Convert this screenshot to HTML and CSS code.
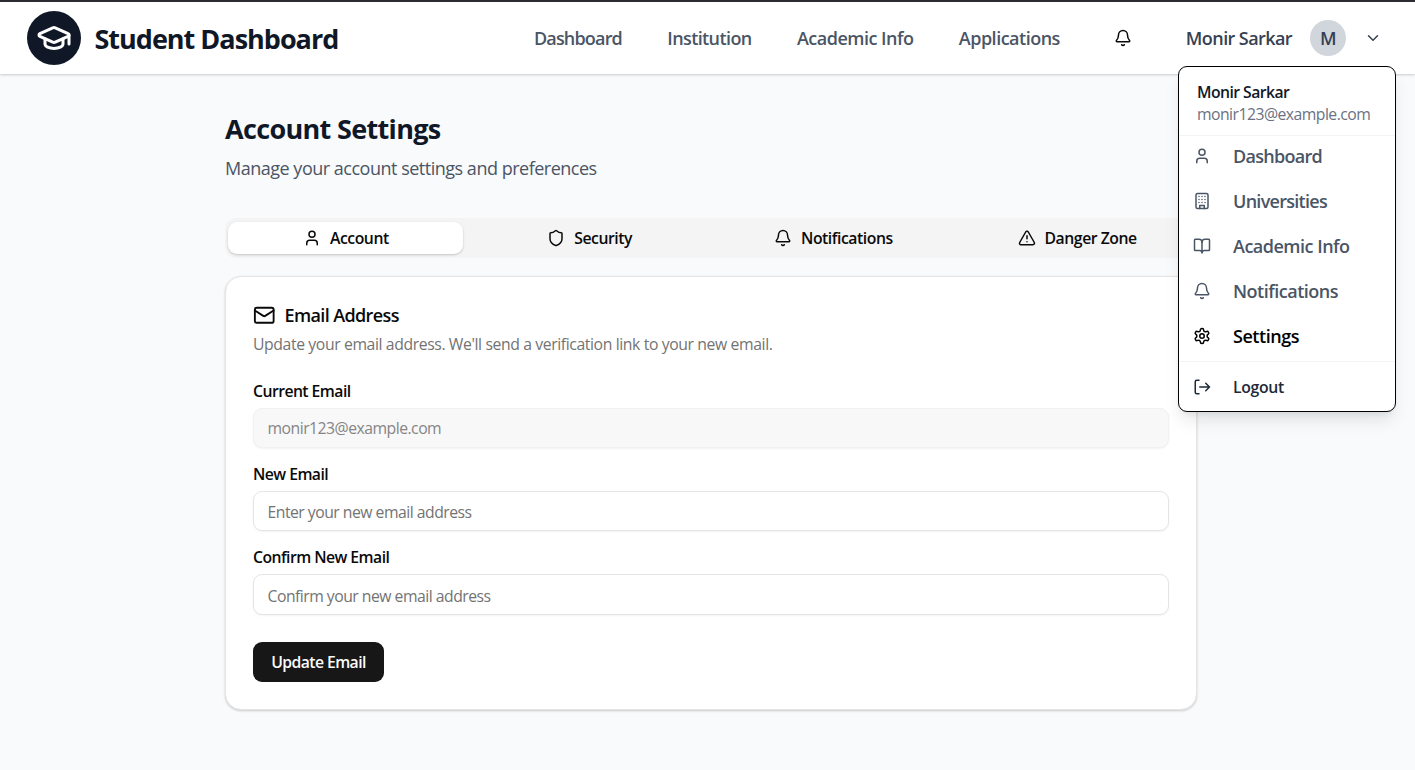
FILE: index.html
```html
<!DOCTYPE html>
<html lang="en">
<head>
<meta charset="utf-8">
<title>Student Dashboard</title>
<link rel="stylesheet" href="styles.css">
</head>
<body>
<svg class="sprite" aria-hidden="true">
  <symbol id="user" viewBox="0 0 24 24"><path d="M19 21v-2a4 4 0 0 0-4-4H9a4 4 0 0 0-4 4v2"/><circle cx="12" cy="7" r="4"/></symbol>
  <symbol id="bell" viewBox="0 0 24 24"><path d="M10.268 21a2 2 0 0 0 3.464 0"/><path d="M3.262 15.326A1 1 0 0 0 4 17h16a1 1 0 0 0 .74-1.673C19.41 13.956 18 12.499 18 8A6 6 0 0 0 6 8c0 4.499-1.411 5.956-2.738 7.326"/></symbol>
  <symbol id="shield" viewBox="0 0 24 24"><path d="M20 13c0 5-3.5 7.5-7.66 8.95a1 1 0 0 1-.67-.01C7.5 20.5 4 18 4 13V6a1 1 0 0 1 1-1c2 0 4.5-1.2 6.24-2.72a1.17 1.17 0 0 1 1.52 0C14.51 3.81 17 5 19 5a1 1 0 0 1 1 1z"/></symbol>
  <symbol id="alert" viewBox="0 0 24 24"><path d="m21.73 18-8-14a2 2 0 0 0-3.48 0l-8 14A2 2 0 0 0 4 21h16a2 2 0 0 0 1.73-3"/><path d="M12 9v4M12 17h.01"/></symbol>
  <symbol id="mail" viewBox="0 0 24 24"><rect x="2" y="4" width="20" height="16" rx="2"/><path d="m22 7-8.97 5.7a1.94 1.94 0 0 1-2.06 0L2 7"/></symbol>
  <symbol id="book" viewBox="0 0 24 24"><path d="M12 7v14"/><path d="M3 18a1 1 0 0 1-1-1V4a1 1 0 0 1 1-1h5a4 4 0 0 1 4 4 4 4 0 0 1 4-4h5a1 1 0 0 1 1 1v13a1 1 0 0 1-1 1h-6a3 3 0 0 0-3 3 3 3 0 0 0-3-3z"/></symbol>
  <symbol id="building" viewBox="0 0 24 24"><rect x="4" y="2" width="16" height="20" rx="2"/><path d="M9 22v-4h6v4M8 6h.01M16 6h.01M12 6h.01M12 10h.01M12 14h.01M16 10h.01M16 14h.01M8 10h.01M8 14h.01"/></symbol>
  <symbol id="gear" viewBox="0 0 24 24"><path d="M12.22 2h-.44a2 2 0 0 0-2 2v.18a2 2 0 0 1-1 1.73l-.43.25a2 2 0 0 1-2 0l-.15-.08a2 2 0 0 0-2.73.73l-.22.38a2 2 0 0 0 .73 2.73l.15.1a2 2 0 0 1 1 1.72v.51a2 2 0 0 1-1 1.74l-.15.09a2 2 0 0 0-.73 2.73l.22.38a2 2 0 0 0 2.73.73l.15-.08a2 2 0 0 1 2 0l.43.25a2 2 0 0 1 1 1.73V20a2 2 0 0 0 2 2h.44a2 2 0 0 0 2-2v-.18a2 2 0 0 1 1-1.73l.43-.25a2 2 0 0 1 2 0l.15.08a2 2 0 0 0 2.73-.73l.22-.39a2 2 0 0 0-.73-2.73l-.15-.08a2 2 0 0 1-1-1.74v-.5a2 2 0 0 1 1-1.74l.15-.09a2 2 0 0 0 .73-2.73l-.22-.38a2 2 0 0 0-2.73-.73l-.15.08a2 2 0 0 1-2 0l-.43-.25a2 2 0 0 1-1-1.73V4a2 2 0 0 0-2-2z"/><circle cx="12" cy="12" r="3"/></symbol>
  <symbol id="logout" viewBox="0 0 24 24"><path d="M8 3H5a2 2 0 0 0-2 2v14a2 2 0 0 0 2 2h3"/><path d="m17 17 5-5-5-5M22 12H9"/></symbol>
  <symbol id="chevron" viewBox="0 0 24 24"><path d="m6 9 6 6 6-6"/></symbol>
  <symbol id="cap" viewBox="0 0 24 24"><path d="M21.42 10.922a1 1 0 0 0-.019-1.838L12.83 5.18a2 2 0 0 0-1.66 0L2.6 9.08a1 1 0 0 0 0 1.832l8.57 3.908a2 2 0 0 0 1.66 0z"/><path d="M22 10v6M6 12.5V16a6 3 0 0 0 12 0v-3.5"/></symbol>
</svg>

<header class="header">
  <div class="brand">
    <span class="brand-mark"><svg class="icon icon-cap"><use href="#cap"/></svg></span>
    <span class="brand-name">Student Dashboard</span>
  </div>
  <nav class="nav">
    <a class="nav-link tight">Dashboard</a>
    <a class="nav-link snug">Institution</a>
    <a class="nav-link">Academic Info</a>
    <a class="nav-link">Applications</a>
  </nav>
  <svg class="icon header-bell"><use href="#bell"/></svg>
  <div class="profile">
    <span class="profile-name">Monir Sarkar</span>
    <span class="avatar">M</span>
    <svg class="icon icon-chevron"><use href="#chevron"/></svg>
  </div>
  <div class="menu">
    <div class="menu-head">
      <div class="menu-name">Monir Sarkar</div>
      <div class="menu-mail">monir123@example.com</div>
    </div>
    <div class="menu-list">
      <a class="menu-item tight"><svg class="icon"><use href="#user"/></svg><span>Dashboard</span></a>
      <a class="menu-item tight"><svg class="icon"><use href="#building"/></svg><span>Universities</span></a>
      <a class="menu-item"><svg class="icon"><use href="#book"/></svg><span>Academic Info</span></a>
      <a class="menu-item"><svg class="icon"><use href="#bell"/></svg><span>Notifications</span></a>
      <a class="menu-item active"><svg class="icon"><use href="#gear"/></svg><span>Settings</span></a>
    </div>
    <a class="menu-item menu-logout"><svg class="icon"><use href="#logout"/></svg><span>Logout</span></a>
  </div>
</header>

<main class="main">
  <h1 class="title">Account Settings</h1>
  <p class="subtitle">Manage your account settings and preferences</p>
  <div class="tabs">
    <div class="tab selected"><svg class="icon"><use href="#user"/></svg><span>Account</span></div>
    <div class="tab"><svg class="icon"><use href="#shield"/></svg><span>Security</span></div>
    <div class="tab"><svg class="icon"><use href="#bell"/></svg><span>Notifications</span></div>
    <div class="tab"><svg class="icon"><use href="#alert"/></svg><span>Danger Zone</span></div>
  </div>
  <section class="card">
    <h2 class="card-title"><svg class="icon icon-mail"><use href="#mail"/></svg><span>Email Address</span></h2>
    <p class="card-text">Update your email address. We'll send a verification link to your new email.</p>
    <div class="field">
      <label class="label">Current Email</label>
      <input class="input" type="text" value="monir123@example.com" disabled>
    </div>
    <div class="field">
      <label class="label">New Email</label>
      <input class="input" type="text" placeholder="Enter your new email address">
    </div>
    <div class="field">
      <label class="label">Confirm New Email</label>
      <input class="input input-last" type="text" placeholder="Confirm your new email address">
    </div>
    <button class="button">Update Email</button>
  </section>
</main>
</body>
</html>
```
FILE: styles.css
```css
* { box-sizing: border-box; }
body {
  margin: 0;
  height: 770px;
  overflow: hidden;
  background: #f9fafb;
  color: #0a0a0a;
  font: 15.75px/22px "Open Sans", "Noto Sans", sans-serif;
  letter-spacing: -0.4px;
}
h1, h2, p { margin: 0; }
.sprite { display: none; }
.icon {
  width: 18px;
  height: 18px;
  flex: none;
  fill: none;
  stroke: currentColor;
  stroke-width: 2;
  stroke-linecap: round;
  stroke-linejoin: round;
}
.header {
  position: relative;
  z-index: 2;
  display: flex;
  align-items: center;
  height: 74px;
  padding: 0 33px 0 27px;
  background: #fff;
  border-top: 2px solid #2f2b33;
  box-shadow: 0 1px 3px rgba(0,0,0,.1), 0 1px 2px rgba(0,0,0,.1);
}
.brand { display: flex; align-items: center; gap: 13.5px; flex: 1; }
.brand-mark {
  display: flex;
  align-items: center;
  justify-content: center;
  width: 54px;
  height: 54px;
  border-radius: 50%;
  background: #101828;
  color: #fff;
}
.icon-cap { width: 36px; height: 36px; }
.brand-name { font-size: 27px; line-height: 36px; font-weight: 700; color: #101828; letter-spacing: -1px; padding-top: 2px; }
.nav { display: flex; gap: 45.3px; font-size: 18px; line-height: 27px; font-weight: 600; color: #4a5565; letter-spacing: -0.5px; }
.nav .tight { letter-spacing: -0.82px; }
.nav .snug { letter-spacing: -0.6px; }
.header-bell { margin: 0 54px 0 54px; }
.profile { display: flex; align-items: center; font-size: 18px; font-weight: 600; color: #364153; letter-spacing: -0.58px; }
.avatar {
  display: flex;
  align-items: center;
  justify-content: center;
  width: 36px;
  height: 36px;
  margin: 0 18px;
  border-radius: 50%;
  background: #d1d5dc;
}
.menu {
  position: absolute;
  top: 64px;
  right: 19px;
  width: 218px;
  height: 346px;
  background: #fff;
  border: 1px solid #000;
  border-radius: 9px;
  box-shadow: 0 11px 17px -3px rgba(0,0,0,.1), 0 4px 7px -4px rgba(0,0,0,.1);
}
.menu-head { height: 69px; padding: 14px 18px 0; border-bottom: 1px solid #f3f4f6; }
.menu-name { font-weight: 600; color: #101828; letter-spacing: -0.55px; }
.menu-mail { color: #6a7282; letter-spacing: -0.53px; }
.menu-list { height: 226px; border-bottom: 1px solid #f3f4f6; }
.menu-item {
  display: flex;
  align-items: center;
  gap: 22px;
  height: 45px;
  padding: 0 14px 5px;
  font-size: 18px;
  font-weight: 600;
  color: #4a5565;
  letter-spacing: -0.5px;
}
.menu-item.tight { letter-spacing: -0.72px; }
.menu-item.active { color: #000; letter-spacing: -0.45px; }
.menu-logout { height: 49px; padding-bottom: 0; font-size: 15.75px; color: #1e2939; letter-spacing: -0.3px; }
.main { width: 972px; margin: 0 0 0 225px; padding-top: 37px; }
.title { font-size: 27px; line-height: 36px; font-weight: 700; color: #101828; letter-spacing: -0.67px; }
.subtitle { margin-top: 8px; font-size: 18px; line-height: 27px; color: #4a5565; letter-spacing: -0.49px; }
.tabs {
  display: grid;
  grid-template-columns: repeat(4, 1fr);
  gap: 9px;
  height: 40px;
  margin-top: 36px;
  padding: 4px 3px;
  border-radius: 11px;
  background: #f4f4f4;
}
.tab {
  display: flex;
  align-items: center;
  justify-content: center;
  gap: 9px;
  border-radius: 9px;
  font-weight: 600;
  letter-spacing: -0.45px;
  padding-left: 1px;
}
.selected { background: #fff; box-shadow: 0 1px 3px rgba(0,0,0,.1), 0 1px 2px rgba(0,0,0,.1); }
.card {
  height: 434px;
  margin-top: 18px;
  padding: 26px 27px 0;
  background: #fff;
  border: 1px solid #e5e5e5;
  border-radius: 16px;
  box-shadow: 0 1px 3px rgba(0,0,0,.1), 0 1px 2px rgba(0,0,0,.1);
}
.card-title { display: flex; align-items: center; gap: 9px; font-size: 18px; line-height: 25px; font-weight: 600; letter-spacing: -0.62px; }
.icon-mail { width: 22.5px; height: 22.5px; }
.card-text { margin: 5px 0 23px; color: #737373; letter-spacing: -0.39px; }
.field { display: flex; flex-direction: column; gap: 6px; height: 83px; padding-top: 2px; }
.label { font-weight: 600; letter-spacing: -0.55px; }
.input {
  height: 40px;
  width: 100%;
  flex: none;
  padding: 2px 13.5px 0;
  border: 1px solid #e5e5e5;
  border-radius: 9px;
  background: #fff;
  color: #0a0a0a;
  font: inherit;
  letter-spacing: -0.51px;
  box-shadow: 0 1px 2px rgba(0,0,0,.05);
}
.input-last { height: 41px; }
.input::placeholder { color: #737373; opacity: 1; }
.input:disabled { padding-top: 0; background: #f8f8f8; color: #858585; border-color: #f1f1f1; }
.button {
  height: 40px;
  width: 131px;
  margin-top: 15px;
  padding: 0;
  border: 0;
  border-radius: 9px;
  background: #171717;
  color: #fafafa;
  font: inherit;
  font-weight: 600;
  letter-spacing: -0.58px;
}
```
